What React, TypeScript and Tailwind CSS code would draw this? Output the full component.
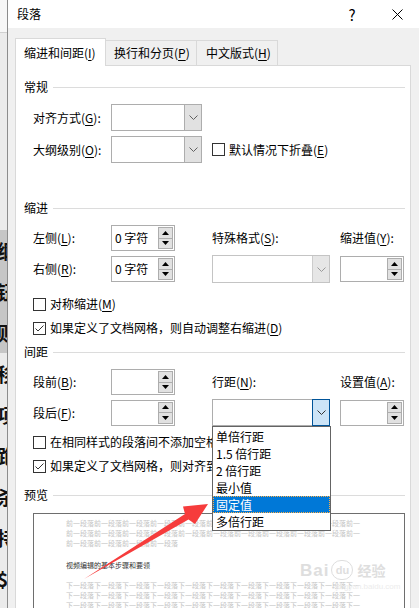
import React from 'react';

const U = ({ children }: { children: React.ReactNode }) => (
  <span className="underline underline-offset-[2px] decoration-1">{children}</span>
);

function Heading({ title, className = '' }: { title: string; className?: string }) {
  return (
    <div className={`flex items-center h-[16px] pl-[8px] pr-[5px] ${className}`}>
      <span className="leading-[16px]">{title}</span>
      <div className="flex-1 h-px bg-[#dcdcdc] ml-[5px]" />
    </div>
  );
}

function Chevron({ color = '#606060' }: { color?: string }) {
  return (
    <svg width="9" height="5" viewBox="0 0 9 5">
      <path d="M0.5 0.5 L4.5 4.5 L8.5 0.5" fill="none" stroke={color} strokeWidth="1" />
    </svg>
  );
}

function Combo({ w, h, state = 'normal', children }: { w: string; h: string; state?: 'normal' | 'dim' | 'focus'; children?: React.ReactNode }) {
  const box = state === 'dim' ? 'border-[#c4c4c4]' : 'border-[#adadad]';
  return (
    <div className={`${w} ${h} relative flex border ${box} bg-white`}>
      <div className="flex-1" />
      {state === 'focus' ? (
        <div className="w-[18px] -my-px -mr-px flex items-center justify-center bg-[#cce4f7] border border-[#005499]">
          <Chevron color="#333" />
        </div>
      ) : state === 'dim' ? (
        <div className="w-[17px] flex items-center justify-center bg-[#e6e6e6] border-l border-[#cccccc]">
          <Chevron color="#9a9a9a" />
        </div>
      ) : (
        <div className="w-[17px] flex items-center justify-center bg-[#e1e1e1] border-l border-[#adadad]">
          <Chevron />
        </div>
      )}
      {children}
    </div>
  );
}

function Spin({ value = '' }: { value?: string }) {
  return (
    <div className="w-[64px] h-[26px] flex border border-[#adadad] bg-white">
      <div className="flex-1 pl-[3px] leading-[24px] whitespace-nowrap">{value}</div>
      <div className="w-[15px] flex flex-col my-px mr-px">
        <div className="flex-1 flex items-center justify-center bg-[#e1e1e1] border border-[#adadad]">
          <svg width="7" height="4" viewBox="0 0 7 4"><path d="M3.5 0 L7 4 L0 4 Z" fill="#000" /></svg>
        </div>
        <div className="flex-1 flex items-center justify-center bg-[#e1e1e1] border border-t-0 border-[#adadad]">
          <svg width="7" height="4" viewBox="0 0 7 4"><path d="M0 0 L7 0 L3.5 4 Z" fill="#000" /></svg>
        </div>
      </div>
    </div>
  );
}

function Checkbox({ checked = false }: { checked?: boolean }) {
  return (
    <div className="w-[13px] h-[13px] border border-[#333] bg-white flex items-center justify-center shrink-0">
      {checked && (
        <svg width="11" height="11" viewBox="0 0 11 11">
          <path d="M1.5 5.5 L4 8 L9.5 2.5" fill="none" stroke="#333" strokeWidth="1" />
        </svg>
      )}
    </div>
  );
}

const docChars = ['纲', '钮', '则', '移', '项', '跑', '杀', '持', '$'];
const lineOptions = ['单倍行距', '1.5 倍行距', '2 倍行距', '最小值', '固定值', '多倍行距'];

export default function App() {
  const prevLine = '前一段落'.repeat(10) + '前一';
  const nextLine = '下一段落'.repeat(10) + '下一';

  return (
    <div className="w-[419px] h-[608px] overflow-hidden relative flex bg-[#f0f0f0] text-[12px] text-black font-['Microsoft_YaHei_UI','Noto_Sans_CJK_SC',sans-serif]">
      {/* document behind the dialog */}
      <div className="w-[8px] shrink-0 flex flex-col bg-[#ebebeb] border-r border-[#8c8c8c] overflow-hidden">
        <div className="h-[33px] shrink-0 bg-[#f7f7f7] border-b border-[#d0d0d0]" />
        <div className="h-[197px] shrink-0" />
        {docChars.map((c, i) => (
          <div
            key={i}
            className={`h-[41px] shrink-0 flex items-center text-[19px] font-bold leading-none text-[#111] font-['Noto_Sans_CJK_SC',serif] whitespace-nowrap ${i < 3 ? 'bg-[#c6c6c6]' : ''}`}
          >
            <span className="-ml-[3px]">{c}</span>
          </div>
        ))}
      </div>

      {/* dialog */}
      <div className="flex-1 flex flex-col min-w-0">
        <div className="h-[28px] shrink-0 bg-white flex items-center justify-between pl-[9px]">
          <span className="leading-[16px]">段落</span>
          <div className="flex items-center h-full">
            <div className="w-[46px] text-center text-[15px] leading-none">?</div>
            <div className="w-[44px] flex justify-center">
              <svg width="11" height="11" viewBox="0 0 11 11">
                <path d="M0.5 0.5 L10.5 10.5 M10.5 0.5 L0.5 10.5" stroke="#000" strokeWidth="1" />
              </svg>
            </div>
          </div>
        </div>

        <div className="flex flex-col pl-[7px] pr-[8px] pt-[10px]">
          {/* tabs */}
          <div className="flex items-end h-[27px]">
            <div className="relative z-10 w-[91px] h-[28px] -mb-px bg-white border border-b-0 border-[#d9d9d9] flex items-center pl-[8px] whitespace-nowrap">
              缩进和间距(<U>I</U>)
            </div>
            <div className="w-[91px] h-[25px] border-t border-r border-[#d9d9d9] flex items-center pl-[8px] whitespace-nowrap">
              换行和分页(<U>P</U>)
            </div>
            <div className="w-[81px] h-[25px] border-t border-r border-[#d9d9d9] flex items-center pl-[9px] whitespace-nowrap">
              中文版式(<U>H</U>)
            </div>
          </div>

          {/* panel */}
          <div className="h-[600px] shrink-0 bg-white border border-[#d9d9d9] flex flex-col">
            <Heading title="常规" className="mt-[13px]" />
            <div className="flex items-center h-[27px] mt-[9px] pl-[17px]">
              <div className="w-[78px]">对齐方式(<U>G</U>):</div>
              <Combo w="w-[91px]" h="h-[27px]" />
            </div>
            <div className="flex items-center h-[27px] mt-[5px] pl-[17px]">
              <div className="w-[78px]">大纲级别(<U>O</U>):</div>
              <Combo w="w-[91px]" h="h-[27px]" />
              <div className="ml-[10px] flex items-center gap-[4px] whitespace-nowrap">
                <Checkbox />
                <span>默认情况下折叠(<U>E</U>)</span>
              </div>
            </div>

            <Heading title="缩进" className="mt-[37px]" />
            <div className="flex items-center h-[26px] mt-[9px] pl-[17px]">
              <div className="w-[78px]">左侧(<U>L</U>):</div>
              <Spin value="0 字符" />
              <div className="ml-[37px] w-[128px]">特殊格式(<U>S</U>):</div>
              <div>缩进值(<U>Y</U>):</div>
            </div>
            <div className="flex items-center h-[28px] mt-[4px] pl-[17px]">
              <div className="w-[78px]">右侧(<U>R</U>):</div>
              <Spin value="0 字符" />
              <div className="ml-[37px]">
                <Combo w="w-[118px]" h="h-[28px]" state="dim" />
              </div>
              <div className="ml-[10px]">
                <Spin />
              </div>
            </div>
            <div className="flex items-center h-[16px] mt-[13px] pl-[17px] gap-[4px]">
              <Checkbox />
              <span>对称缩进(<U>M</U>)</span>
            </div>
            <div className="flex items-center h-[16px] mt-[8px] pl-[17px] gap-[4px] whitespace-nowrap">
              <Checkbox checked />
              <span>如果定义了文档网格，则自动调整右缩进(<U>D</U>)</span>
            </div>

            <Heading title="间距" className="mt-[8px]" />
            <div className="flex items-center h-[26px] mt-[9px] pl-[17px]">
              <div className="w-[78px]">段前(<U>B</U>):</div>
              <Spin />
              <div className="ml-[37px] w-[128px]">行距(<U>N</U>):</div>
              <div>设置值(<U>A</U>):</div>
            </div>
            <div className="flex items-center h-[27px] mt-[4px] pl-[17px]">
              <div className="w-[78px]">段后(<U>F</U>):</div>
              <Spin />
              <div className="ml-[37px] relative z-20">
                <Combo w="w-[118px]" h="h-[27px]" state="focus" />
                <div className="absolute left-0 top-full w-[119px] bg-white border border-[#646464] pt-px">
                  {lineOptions.map((o) =>
                    o === '固定值' ? (
                      <div key={o} className="h-[17px] leading-[15px] px-[2px] bg-[#0078d7] text-white border border-dotted border-[#ffae45] whitespace-nowrap">
                        {o}
                      </div>
                    ) : (
                      <div key={o} className="h-[17px] leading-[17px] px-[3px] whitespace-nowrap">
                        {o}
                      </div>
                    )
                  )}
                </div>
              </div>
              <div className="ml-[10px]">
                <Spin />
              </div>
            </div>
            <div className="flex items-center h-[16px] mt-[8px] pl-[17px] gap-[4px] whitespace-nowrap">
              <Checkbox />
              <span>在相同样式的段落间不添加空格(<U>C</U>)</span>
            </div>
            <div className="flex items-center h-[16px] mt-[8px] pl-[17px] gap-[4px] whitespace-nowrap">
              <Checkbox checked />
              <span>如果定义了文档网格，则对齐到网格(<U>W</U>)</span>
            </div>

            <Heading title="预览" className="mt-[13px]" />
            <div className="ml-[17px] mt-[10px] w-[372px] h-[120px] shrink-0 border border-[#6e6e6e] bg-white pl-[32px] pt-[4px] text-[7px] leading-[10px] whitespace-nowrap">
              <div className="text-[#c4c4c4]">{prevLine}</div>
              <div className="text-[#c4c4c4]">{prevLine}</div>
              <div className="text-[#c4c4c4]">{'前一段落'.repeat(4)}</div>
              <div className="mt-[12px] text-[#333]">视频编辑的基本步骤和要领</div>
              <div className="mt-[10px] text-[#c4c4c4]">{nextLine}</div>
              <div className="text-[#c4c4c4]">{nextLine}</div>
              <div className="text-[#c4c4c4]">{nextLine}</div>
            </div>
          </div>
        </div>
      </div>

      {/* red annotation arrow */}
      <svg className="absolute left-0 top-0 z-30 pointer-events-none" width="419" height="608" viewBox="0 0 419 608">
        <polygon points="84,579 188.5,519.5 195,524 208,504 183,506.5 185,514" fill="#f63c3c" />
      </svg>

      {/* watermark */}
      <div className="absolute left-[300px] top-[560px] z-30 flex flex-col pointer-events-none">
        <div className="flex items-center gap-[2px] text-[#dedede] font-bold">
          <span className="text-[17px] leading-none tracking-[1px] font-['Liberation_Sans',sans-serif]">Bai</span>
          <span className="w-[22px] h-[20px] rounded-full border border-[#dedede] text-[11px] leading-none flex items-center justify-center font-['Liberation_Sans',sans-serif]">du</span>
          <span className="text-[14px] leading-none ml-[2px]">经验</span>
        </div>
        <div className="ml-[36px] mt-[3px] text-[8px] leading-none text-[#ececec] font-['Liberation_Sans',sans-serif]">jingyan.baidu.com</div>
      </div>
    </div>
  );
}
